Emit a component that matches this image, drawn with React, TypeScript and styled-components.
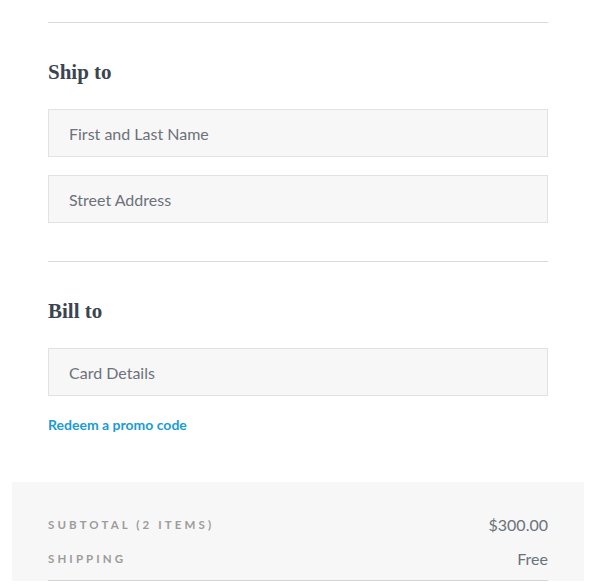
import React from "react";
import styled, { createGlobalStyle } from "styled-components";

const GlobalStyle = createGlobalStyle`
    html, body {
        margin: 0;
        padding: 0;
        background: #fff;
        overflow-x: hidden;
    }
    body {
        font-family: Lato, "Open Sans", sans-serif;
        -webkit-font-smoothing: antialiased;
    }
`;

const Page = styled.div`
    width: 596px;
    padding-top: 22px;
`;

const Section = styled.section`
    padding: 0 48px;
`;

const Divider = styled.hr`
    margin: 0;
    border: 0;
    border-top: 1px solid #d9d9d9;
`;

const Heading = styled.h2`
    margin: 37px 0 25px 0;
    font-family: "Liberation Serif", "Times New Roman", serif;
    font-weight: bold;
    font-size: 21px;
    line-height: 24px;
    color: #3b4451;
`;

const Fields = styled.div<{ last?: boolean }>`
    display: flex;
    flex-direction: column;
    gap: 18px;
    margin-bottom: ${(p) => (p.last ? "0" : "38px")};
`;

const Field = styled.input`
    box-sizing: border-box;
    width: 100%;
    height: 48px;
    padding: 0 20px;
    border: 1px solid #e2e2e2;
    border-radius: 0;
    background: #f7f7f7;
    font-family: Lato, "Open Sans", sans-serif;
    font-size: 16px;
    color: #3b4451;
    outline: none;

    &::placeholder {
        color: #6c717a;
        opacity: 1;
    }
`;

const PromoLink = styled.a`
    display: block;
    margin: 20px 0 48px 0;
    font-size: 14px;
    line-height: 18px;
    font-weight: bold;
    color: #1a9bd7;
    text-decoration: none;
    cursor: pointer;
`;

const Summary = styled.div`
    margin: 0 12px;
    padding: 25px 36px 0 36px;
    background: #f7f7f7;
`;

const Row = styled.div`
    display: flex;
    justify-content: space-between;
    align-items: center;
    height: 34px;
`;

const Label = styled.span`
    font-size: 11.5px;
    font-weight: bold;
    letter-spacing: 3.1px;
    text-transform: uppercase;
    color: #9c9c9c;
`;

const Value = styled.span`
    font-size: 16px;
    color: #6c717a;
`;

const SummaryRule = styled.hr`
    margin: 5px 0 0 0;
    border: 0;
    border-top: 1px solid #d4d4d4;
`;

const rows = [
    { label: "Subtotal (2 items)", value: "$300.00" },
    { label: "Shipping", value: "Free" },
];

export default function App() {
    return (
        <>
            <GlobalStyle />
            <Page>
                <Section>
                    <Divider />
                    <Heading>Ship to</Heading>
                    <Fields>
                        <Field placeholder="First and Last Name" />
                        <Field placeholder="Street Address" />
                    </Fields>
                    <Divider />
                    <Heading>Bill to</Heading>
                    <Fields last>
                        <Field placeholder="Card Details" />
                    </Fields>
                    <PromoLink>Redeem a promo code</PromoLink>
                </Section>
                <Summary>
                    {rows.map((r) => (
                        <Row key={r.label}>
                            <Label>{r.label}</Label>
                            <Value>{r.value}</Value>
                        </Row>
                    ))}
                    <SummaryRule />
                </Summary>
            </Page>
        </>
    );
}
